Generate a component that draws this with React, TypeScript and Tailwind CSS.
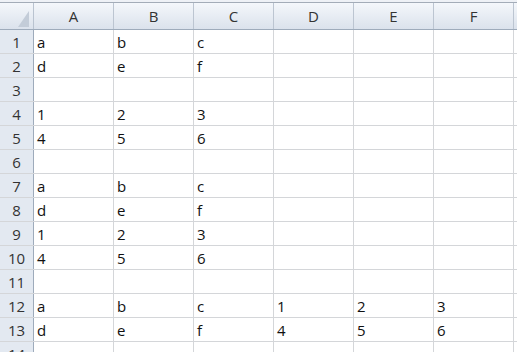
import React from "react";

const cols = ["A", "B", "C", "D", "E", "F"];
const data: string[][] = [
  ["a", "b", "c"],
  ["d", "e", "f"],
  [],
  ["1", "2", "3"],
  ["4", "5", "6"],
  [],
  ["a", "b", "c"],
  ["d", "e", "f"],
  ["1", "2", "3"],
  ["4", "5", "6"],
  [],
  ["a", "b", "c", "1", "2", "3"],
  ["d", "e", "f", "4", "5", "6"],
  [],
];

export default function App() {
  return (
    <div
      className="w-[517px] h-[352px] overflow-hidden bg-white text-[15px] text-[#111]"
      style={{ fontFamily: '"Open Sans", "Liberation Sans", sans-serif' }}
    >
      <div className="h-[2px] bg-[#eef1f6]" />
      <div className="h-[1px] bg-[#a3acb8]" />
      <div className="flex h-[27px] border-b border-[#9eabbb] bg-gradient-to-b from-[#f4f7fb] to-[#dbe2ec]">
        <div className="w-[34px] shrink-0 border-r border-[#b9c3d0] relative">
          <svg className="absolute right-[4px] bottom-[2px]" width="11" height="16" viewBox="0 0 11 16">
            <polygon points="11,0 11,16 0,16" fill="#c3ccd8" />
          </svg>
        </div>
        {cols.map((c) => (
          <div
            key={c}
            className="w-[80px] shrink-0 border-r border-[#bcc5d1] flex items-center justify-center text-[#333] pt-[1px]"
          >
            {c}
          </div>
        ))}
        <div className="flex-1" />
      </div>
      {data.map((row, i) => (
        <div key={i} className="flex h-[24px] border-b border-[#d4d6d9]">
          <div className="w-[34px] shrink-0 border-r border-[#9eabbb] bg-[#e3e9f1] flex items-center justify-center text-[#333] pt-[1px]">
            {i + 1}
          </div>
          {cols.map((c, j) => (
            <div
              key={c}
              className="w-[80px] shrink-0 border-r border-[#d4d6d9] flex items-end pl-[3px] pb-[1px] leading-[20px]"
            >
              {row[j] ?? ""}
            </div>
          ))}
          <div className="flex-1" />
        </div>
      ))}
    </div>
  );
}
